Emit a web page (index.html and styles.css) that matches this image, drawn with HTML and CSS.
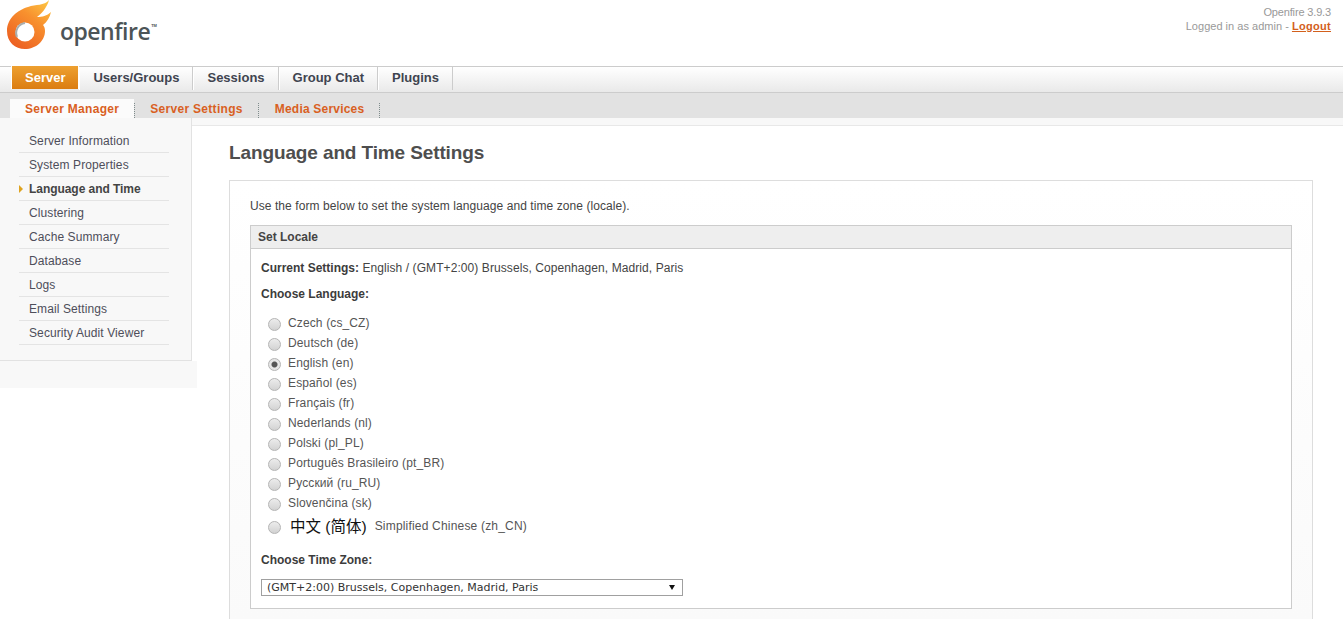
FILE: index.html
```html
<!DOCTYPE html>
<html lang="en">
<head>
    <meta charset="UTF-8">
    <title>Openfire Admin Console: Language and Time Settings</title>
    <link rel="stylesheet" href="styles.css">
</head>
<body>
    <div class="header">
        <div class="logo">
            <svg class="logo-mark" width="55" height="52" viewBox="0 0 55 52">
                <defs>
                    <linearGradient id="flame" x1="0.9" y1="0" x2="0.25" y2="1">
                        <stop offset="0" stop-color="#fdc644"/>
                        <stop offset="0.4" stop-color="#f8912e"/>
                        <stop offset="1" stop-color="#ec5f22"/>
                    </linearGradient>
                </defs>
                <path fill="url(#flame)" d="M49 0C44 6 36 4 28 7C18 10 7 18 7 31C7 42 15 49 25 49C36 49 45 41 45 31C45 28 44 26 43 25C47 22 50 17 51 12C47 16 42 17 37 17C41 14 47 8 49 0Z"/>
                <circle cx="25" cy="32" r="9.500" fill="#fff"/>
                <path fill="none" stroke="#a8adae" stroke-width="2" d="M17 37C14.500 31 18 24 25 23"/>
            </svg>
            <span class="logo-text">openfire</span><span class="logo-tm">TM</span>
        </div>
        <div class="userinfo">
            <div class="version">Openfire 3.9.3</div>
            <div>Logged in as admin - <a class="logout" href="#">Logout</a></div>
        </div>
    </div>

    <div class="mainnav">
        <a class="maintab active" href="#">Server</a>
        <a class="maintab" href="#">Users/Groups</a>
        <a class="maintab" href="#">Sessions</a>
        <a class="maintab" href="#">Group Chat</a>
        <a class="maintab" href="#">Plugins</a>
    </div>

    <div class="subnav">
        <a class="subtab active" href="#">Server Manager</a>
        <a class="subtab" href="#">Server Settings</a>
        <a class="subtab" href="#">Media Services</a>
    </div>

    <div class="page">
        <div class="sidebar">
            <ul class="sidemenu">
                <li><a href="#">Server Information</a></li>
                <li><a href="#">System Properties</a></li>
                <li class="current"><a href="#">Language and Time</a></li>
                <li><a href="#">Clustering</a></li>
                <li><a href="#">Cache Summary</a></li>
                <li><a href="#">Database</a></li>
                <li><a href="#">Logs</a></li>
                <li><a href="#">Email Settings</a></li>
                <li><a href="#">Security Audit Viewer</a></li>
            </ul>
        </div>

        <div class="content">
            <h1>Language and Time Settings</h1>
            <div class="panel">
                <p class="intro">Use the form below to set the system language and time zone (locale).</p>
                <div class="box">
                    <div class="box-title">Set Locale</div>
                    <div class="box-body">
                        <p class="current-settings"><b>Current Settings:</b> English / (GMT+2:00) Brussels, Copenhagen, Madrid, Paris</p>
                        <p class="label"><b>Choose Language:</b></p>
                        <div class="langs">
                            <label class="lang"><input type="radio" name="loc"><span>Czech (cs_CZ)</span></label>
                            <label class="lang"><input type="radio" name="loc"><span>Deutsch (de)</span></label>
                            <label class="lang"><input type="radio" name="loc" checked><span>English (en)</span></label>
                            <label class="lang"><input type="radio" name="loc"><span>Español (es)</span></label>
                            <label class="lang"><input type="radio" name="loc"><span>Français (fr)</span></label>
                            <label class="lang"><input type="radio" name="loc"><span>Nederlands (nl)</span></label>
                            <label class="lang"><input type="radio" name="loc"><span>Polski (pl_PL)</span></label>
                            <label class="lang"><input type="radio" name="loc"><span>Português Brasileiro (pt_BR)</span></label>
                            <label class="lang"><input type="radio" name="loc"><span>Русский (ru_RU)</span></label>
                            <label class="lang"><input type="radio" name="loc"><span>Slovenčina (sk)</span></label>
                            <label class="lang lang-zh"><input type="radio" name="loc"><span class="zh">中文 (简体)</span><span class="zh-name">Simplified Chinese (zh_CN)</span></label>
                        </div>
                        <p class="label tz-label"><b>Choose Time Zone:</b></p>
                        <div class="tz-select">
                            <span>(GMT+2:00) Brussels, Copenhagen, Madrid, Paris</span>
                            <svg width="6" height="5" viewBox="0 0 6 5"><path d="M0 0H6L3 5Z" fill="#111"/></svg>
                        </div>
                    </div>
                </div>
            </div>
        </div>
    </div>
</body>
</html>
```

FILE: styles.css
```css
html, body {
    height: 619px;
    overflow: hidden;
}

body {
    margin: 0;
    font-family: "Liberation Sans", Arial, sans-serif;
    font-size: 12px;
    color: #444;
    background-color: #fff;
}

a {
    text-decoration: none;
}

/* header */
.header {
    height: 66px;
    display: flex;
    justify-content: space-between;
}

.logo {
    display: flex;
    align-items: flex-start;
}

.logo-text {
    margin: 16px 0 0 5px;
    font-family: "Open Sans", sans-serif;
    font-size: 23px;
    line-height: 30px;
    font-weight: 600;
    letter-spacing: -0.5px;
    color: #4c5457;
}

.logo-tm {
    margin: 23px 0 0 1px;
    font-size: 4px;
    font-weight: bold;
    color: #4c5457;
}

.userinfo {
    padding: 5px 12px 0 0;
    text-align: right;
    font-size: 11px;
    line-height: 14px;
    color: #999;
    letter-spacing: 0.02px;
}

.version {
    letter-spacing: -0.15px;
}

.logout {
    font-weight: bold;
    letter-spacing: 0.3px;
    color: #d3601c;
    text-decoration: underline;
}

/* main tabs */
.mainnav {
    height: 25px;
    display: flex;
    padding-left: 11px;
    border-top: 1px solid #ccc;
    border-bottom: 1px solid #ccc;
    background: linear-gradient(#fff, #e9e9e9);
}

.maintab {
    display: flex;
    align-items: center;
    justify-content: center;
    height: 21px;
    padding: 0 13px 2px;
    border-right: 1px solid #ccc;
    border-left: 1px solid #fff;
    font-size: 13px;
    font-weight: bold;
    color: #3f4450;
}

.maintab.active {
    height: 22px;
    margin-top: -1px;
    padding-bottom: 1px;
    color: #fff;
    background: linear-gradient(#eea030, #db7d12);
    background-clip: padding-box;
    border-right: 1px solid #fff;
}

/* sub tabs */
.subnav {
    height: 25px;
    display: flex;
    padding-left: 10px;
    background-color: #e2e2e2;
}

.subtab {
    position: relative;
    display: flex;
    align-items: center;
    height: 18px;
    margin-top: 6px;
    margin-right: 1px;
    padding: 1px 15px 0;
    font-size: 12px;
    font-weight: bold;
    letter-spacing: 0.3px;
    color: #d9601f;
}

.subtab:last-child {
    padding-left: 16px;
    letter-spacing: 0.2px;
}

.subtab::after {
    content: "";
    position: absolute;
    right: -1px;
    top: 4px;
    height: 15px;
    border-right: 1px dotted #7f8c8c;
}

.subtab.active {
    background-color: #fbfbfb;
}

/* page */
.page {
    display: flex;
    align-items: flex-start;
    background: linear-gradient(#f8f8f8 7px, #fff 7px);
}

.sidebar {
    width: 197px;
    height: 270px;
    flex-shrink: 0;
    background:
        linear-gradient(#f8f8f8, #f8f8f8) 0 0 / 192px 100% no-repeat,
        linear-gradient(#f8f8f8, #f8f8f8) 0 100% / 100% 27px no-repeat,
        linear-gradient(#f8f8f8 7px, #e8e8e8 7px) 0 0 / 100% 8px no-repeat;
}

.sidemenu {
    width: 192px;
    height: 243px;
    box-sizing: border-box;
    margin: 0;
    padding: 11px 0 0 19px;
    list-style: none;
    border-right: 1px solid #e2e2e2;
    border-bottom: 1px solid #e2e2e2;
}

.sidemenu li {
    width: 150px;
    height: 24px;
    box-sizing: border-box;
    border-bottom: 1px solid #e4e4e4;
    line-height: 25px;
    position: relative;
}

.sidemenu a {
    padding-left: 10px;
    letter-spacing: 0.1px;
    color: #4e4e5a;
}

.sidemenu .current a {
    font-weight: bold;
    letter-spacing: -0.05px;
    color: #444;
}

.sidemenu .current::before {
    content: "";
    position: absolute;
    left: 0;
    top: 8px;
    border-left: 4px solid #dea320;
    border-top: 4px solid transparent;
    border-bottom: 4px solid transparent;
}

.content {
    flex: 1;
    margin-top: 7px;
    padding: 0 30px 0 32px;
    border-top: 1px solid #e8e8e8;
}

h1 {
    margin: 0;
    padding-top: 15px;
    font-size: 19px;
    line-height: 24px;
    font-weight: bold;
    letter-spacing: -0.12px;
    color: #4e4e4e;
}

.panel {
    height: 438px;
    margin-top: 15px;
    padding: 0 20px;
    border: 1px solid #ddd;
    border-bottom: none;
    background: linear-gradient(#fff, #fafafa);
}

.intro {
    margin: 0;
    padding-top: 18px;
    line-height: 15px;
    letter-spacing: 0.07px;
}

.box {
    margin-top: 11px;
    border: 1px solid #ccc;
    background-color: #fff;
}

.box-title {
    height: 22px;
    padding-left: 7px;
    background-color: #eee;
    border-bottom: 1px solid #ccc;
    font-weight: bold;
    line-height: 23px;
}

.box-body {
    height: 347px;
    padding: 12px 10px 0;
}

.box-body p {
    margin: 0;
    line-height: 15px;
}

.box-body b {
    letter-spacing: 0;
    color: #3c3c3c;
}

.current-settings {
    letter-spacing: 0.08px;
}

.label {
    padding-top: 11px;
}

.langs {
    padding-top: 11px;
}

.lang {
    display: flex;
    align-items: center;
    height: 20px;
    padding-left: 7px;
    letter-spacing: 0.13px;
    color: #555;
}

.lang input {
    width: 13px;
    height: 13px;
    margin: 2px 7px 0 0;
    flex-shrink: 0;
    appearance: none;
    border: 1px solid #b4b4b4;
    border-radius: 50%;
    background: linear-gradient(#ececec, #d2d2d2);
}

.lang input:checked {
    background: radial-gradient(circle, #555 0 2.500px, #e6e6e6 3.500px);
}

.lang-zh {
    height: 26px;
}

.lang-zh input {
    margin-top: 3px;
}

.zh {
    margin: 0 8px 2px 2px;
    font-family: "Liberation Sans", "Noto Sans CJK SC", sans-serif;
    font-size: 15.500px;
    letter-spacing: 0;
    color: #111;
}

.zh-name {
    letter-spacing: 0.19px;
}

.box-body .tz-label {
    padding-top: 14px;
}

.tz-select {
    width: 408px;
    height: 15px;
    margin-top: 11px;
    padding: 0 7px 0 5px;
    display: flex;
    align-items: center;
    justify-content: space-between;
    border: 1px solid #a0a0a0;
    font-family: "DejaVu Sans", sans-serif;
    font-size: 11px;
    color: #333;
}
```
